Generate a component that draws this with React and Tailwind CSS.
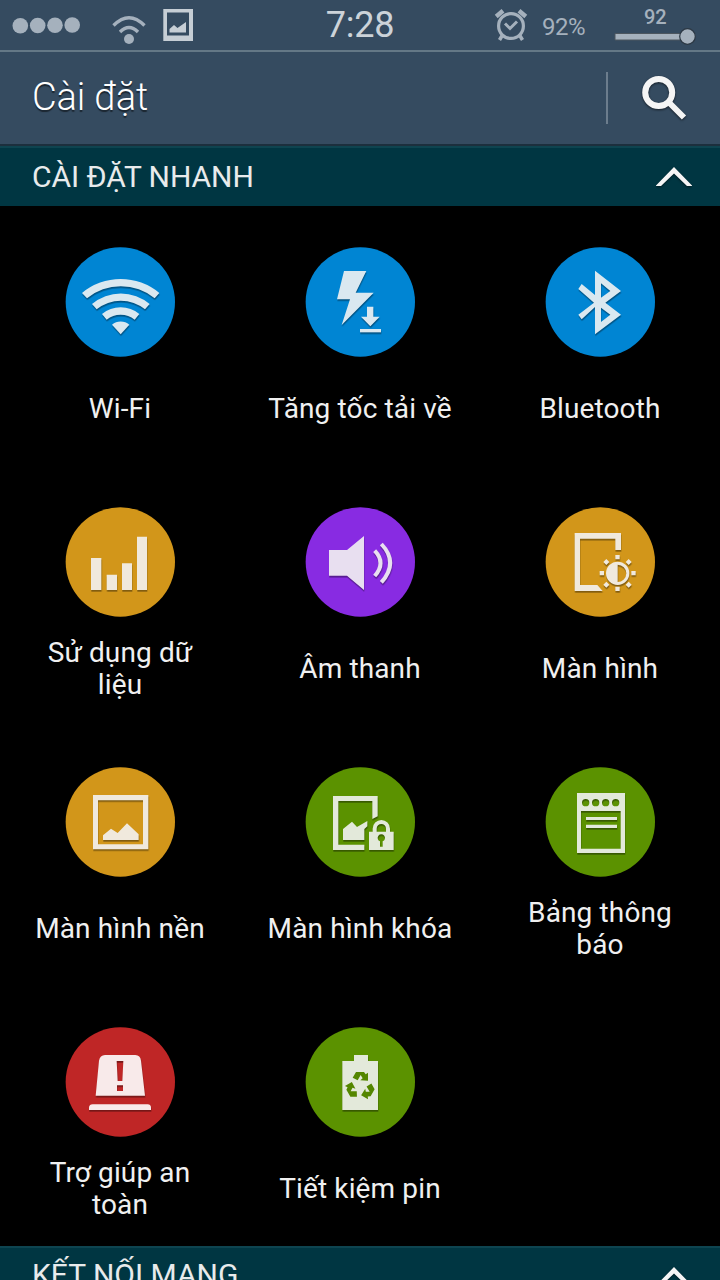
import React from "react";

function WifiGlyph() {
  return (
    <>
      <path d="M96 174A181 181 0 0 1 328 174L314 190A160 160 0 0 0 111 190Z" />
      <path d="M126 207A134 134 0 0 1 299 207L285 223A115 115 0 0 0 140 223Z" />
      <path d="M156 237A88 88 0 0 1 268 237L254 254A68 68 0 0 0 170 254Z" />
      <path d="M186 269A40 40 0 0 1 238 269L212 298Z" />
    </>
  );
}

function BoostGlyph() {
  return (
    <>
      <path d="M252 108H319L287 173H341L245 270L270 193H231Z" />
      <path d="M321 215H340V245H359L331 274L303 245H321Z" />
      <path d="M300 282H363V292H300Z" />
    </>
  );
}

function BluetoothGlyph() {
  return (
    <path
      fillRule="evenodd"
      d="M195 107L273 168L226 203L273 239L195 298V216L155 253L145 239L192 203L145 162L155 147L195 180ZM213 145V188L241 168ZM213 218V261L241 239Z"
    />
  );
}

function DataGlyph() {
  return <path d="M153 189H184V285H153ZM200 239H231V285H200ZM246 205H276V285H246ZM291 125H321V285H291Z" />;
}

function SoundGlyph() {
  return (
    <>
      <path d="M117 165H171L222 123V285L171 242H117Z" />
      <path d="M254 167Q289 204 254 243M274 147Q327 203 274 262" fill="none" stroke="currentColor" strokeWidth="12" />
    </>
  );
}

function DisplayGlyph() {
  return (
    <>
      <path d="M854 114H993V165H976V131H870V270H922L938 288H854Z" />
      <path fillRule="evenodd" d="M948 235a35 35 0 1 0 70 0a35 35 0 1 0 -70 0ZM983 209V261A26 26 0 0 0 983 209Z" />
      <path d="M976 180h13v13h-13ZM976 275h13v13h-13ZM929 228h13v13h-13ZM1024 228h13v13h-13Z" />
      <path d="M949 192l9 9l-9 9l-9 -9ZM1016 192l9 9l-9 9l-9 -9ZM949 260l9 9l-9 9l-9 -9ZM1016 260l9 9l-9 9l-9 -9Z" />
    </>
  );
}

function WallpaperGlyph() {
  return (
    <>
      <path fillRule="evenodd" d="M189 120H355V283H189ZM204 136V268H339V136Z" />
      <path d="M219 255V241L243 221L263 234L291 205L326 238V255Z" />
    </>
  );
}

function LockGlyph() {
  return (
    <>
      <path d="M219 123H353V184L337 192V138H235V269H313V285H219Z" />
      <path d="M249 255V222L276 200L291 216L322 198V214L313 222V255Z" />
      <path d="M344 234V221A20 20 0 0 1 384 221V234" fill="none" stroke="currentColor" strokeWidth="12" />
      <path fillRule="evenodd" d="M327 230H401V285H327ZM360 259V275H368V259A11 11 0 1 0 360 259Z" />
    </>
  );
}

function PanelGlyph() {
  return (
    <>
      <path
        fillRule="evenodd"
        d="M171 114H315V294H171ZM183 168V281H302V168ZM186 143a11 11 0 1 0 22 0a11 11 0 1 0 -22 0ZM216 143a11 11 0 1 0 22 0a11 11 0 1 0 -22 0ZM246 143a11 11 0 1 0 22 0a11 11 0 1 0 -22 0ZM276 143a11 11 0 1 0 22 0a11 11 0 1 0 -22 0Z"
      />
      <path d="M198 186H291V195H198ZM198 209H291V219H198Z" />
    </>
  );
}

function SafetyGlyph() {
  return (
    <>
      <path
        fillRule="evenodd"
        d="M195 120H286Q301 121 303 137L315 242H167L177 137Q180 121 195 120ZM230 138L233 198H247L250 138ZM231 211V228H249V211Z"
      />
      <path d="M147 285V277Q148 268 158 268H323Q332 268 333 277V285Z" />
    </>
  );
}

// one recycle arrow, repeated three times around the centre
const RECYCLE_ARROW = "M938 188L948 171H972L977 178L984 173V197L961 196L968 190L962 180L953 196Z";

function BatteryGlyph() {
  return (
    <>
      <path d="M907 138H942V120H984V138H1014V285H907Z" />
      <g fill="#548600">
        <path d={RECYCLE_ARROW} />
        <path d={RECYCLE_ARROW} transform="rotate(120 961 213)" />
        <path d={RECYCLE_ARROW} transform="rotate(240 961 213)" />
      </g>
    </>
  );
}

const BLUE = "text-[#0085d3]";
const ORANGE = "text-[#d2961a]";
const GREEN = "text-[#5b9200]";

const quickSettings = [
  { label: "Wi-Fi", Glyph: WifiGlyph, disc: BLUE, ink: "text-[#dae8f0]", x: 45 },
  { label: "Tăng tốc tải về", Glyph: BoostGlyph, disc: BLUE, ink: "text-[#dae8f0]", x: 135 },
  { label: "Bluetooth", Glyph: BluetoothGlyph, disc: BLUE, ink: "text-[#dae8f0]", x: 45 },
  { label: "Sử dụng dữ liệu", Glyph: DataGlyph, disc: ORANGE, ink: "text-[#f0e9dd]", x: 75 },
  { label: "Âm thanh", Glyph: SoundGlyph, disc: "text-[#882be2]", ink: "text-[#e8dff0]", x: 45 },
  { label: "Màn hình", Glyph: DisplayGlyph, disc: ORANGE, ink: "text-[#f0e9dd]", x: 765 },
  { label: "Màn hình nền", Glyph: WallpaperGlyph, disc: ORANGE, ink: "text-[#f0e9dd]", x: 105 },
  { label: "Màn hình khóa", Glyph: LockGlyph, disc: GREEN, ink: "text-[#e3e9da]", x: 135 },
  { label: "Bảng thông báo", Glyph: PanelGlyph, disc: GREEN, ink: "text-[#e3e9da]", x: 75 },
  { label: "Trợ giúp an toàn", Glyph: SafetyGlyph, disc: "text-[#bf2626]", ink: "text-[#f8eaea]", x: 75 },
  { label: "Tiết kiệm pin", Glyph: BatteryGlyph, disc: GREEN, ink: "text-[#e3e9da]", x: 795 },
];

function SettingTile({ label, Glyph, disc, ink, x }) {
  return (
    <div className="flex h-[260px] flex-col items-center pt-[41px]">
      <svg className={`h-[110px] w-[110px] shrink-0 ${disc}`} viewBox={`${x} 36 330 330`}>
        <circle cx={x + 166} cy="201" r="164" fill="currentColor" />
        <g className={`[filter:drop-shadow(1px_5px_1px_rgba(0,0,0,0.38))] ${ink}`} fill="currentColor">
          <Glyph />
        </g>
      </svg>
      <div className="mt-5 flex h-16 w-[190px] items-center justify-center text-center text-[28px] leading-8 tracking-[0.13px] text-[#f0f0f0]">
        <span>{label}</span>
      </div>
    </div>
  );
}

function SectionHeader({ title, titleClass = "" }) {
  return (
    <div className="flex h-[60px] shrink-0 items-center justify-between border-t-2 border-[#0e4450] bg-[#003642] pl-8 pr-7">
      <h2 className={`text-[30px] leading-none text-[#e8ebec] ${titleClass}`}>{title}</h2>
      <svg className="h-6 w-9" viewBox="0 0 36 24" fill="#f5f5f5">
        <path d="M18 2L36.5 21H31L18 8.5L5 21H-0.5Z" className="[filter:drop-shadow(0_1px_1px_rgba(0,0,0,0.5))]" />
      </svg>
    </div>
  );
}

function StatusBar() {
  return (
    <div className="flex h-[50px] items-center text-[#a5b1bd]">
      <svg className="h-[50px] w-[200px]" viewBox="0 0 200 50" fill="currentColor">
        <circle cx="20.3" cy="25.7" r="7.8" />
        <circle cx="37.7" cy="25.5" r="7.8" />
        <circle cx="55" cy="25.3" r="7.8" />
        <circle cx="72.2" cy="25" r="7.8" />
        <path d="M113.500 25.500Q129 10 144.500 25.500M120 32Q129 23 138 32" fill="none" stroke="currentColor" strokeWidth="3.400" />
        <circle cx="129" cy="39" r="5" />
        <path fill="#c6ced5" fillRule="evenodd" d="M163.300 9H193V41H163.300ZM167 12.500V35.500H189V12.500Z" />
        <path fill="#c6ced5" d="M169.500 32.500V29L174 25L177.500 28L186 22V32.500Z" />
      </svg>
      <span className="ml-[125px] w-[70px] whitespace-nowrap text-center text-[36px] leading-none tracking-[-0.2px] text-[#ccd3d9]">7:28</span>
      <svg className="ml-[99px] h-[34px] w-[34px]" viewBox="0 0 34 34" fill="none" stroke="currentColor">
        <circle cx="17" cy="18" r="12.400" strokeWidth="3.200" />
        <path d="M11 15.500L16 20.500L23 13.500" strokeWidth="3" />
        <path d="M2.200 8.500L9 2.800M31.800 8.500L25 2.800" strokeWidth="4.400" />
        <path d="M8.500 27L5.500 32M25.500 27L28.500 32" strokeWidth="3.500" />
      </svg>
      <span className="ml-[14px] w-[45px] whitespace-nowrap pt-[3px] text-[24px] leading-none tracking-[-0.5px]">92%</span>
      <div className="ml-[27px] flex flex-col pt-[3px]">
        <span className="pl-[30px] text-[20px] font-medium leading-5">92</span>
        <svg className="h-5 w-[84px]" viewBox="0 0 84 20">
          <path d="M1 6.500H68V13H1Z" fill="currentColor" stroke="#4c565f" />
          <circle cx="73.500" cy="9.500" r="7.800" fill="currentColor" stroke="#2c3844" strokeWidth="1.200" />
        </svg>
      </div>
    </div>
  );
}

export default function App() {
  return (
    <div className="flex h-[1280px] w-[720px] flex-col overflow-hidden bg-black font-[Roboto,sans-serif]">
      <header className="h-[146px] shrink-0 border-b-2 border-[#1c2f3d] bg-[#354b60]">
        <StatusBar />
        <div className="flex h-[94px] items-center border-t-2 border-[#647886] pl-8">
          <h1 className="pb-0.5 text-[38px] font-light leading-none tracking-[-0.15px] text-white [text-shadow:0_2px_1px_rgba(0,0,0,0.5)]">Cài đặt</h1>
          <div className="ml-auto h-[52px] w-0.5 bg-[#6c7d8d]" />
          <svg className="ml-[32px] mr-[30px] h-[50px] w-[50px]" viewBox="0 0 50 50" fill="none" stroke="#f5f5f5">
            <g className="[filter:drop-shadow(0_1px_1px_rgba(0,0,0,0.6))]">
              <circle cx="18.700" cy="19.500" r="13.500" strokeWidth="6" />
              <path d="M28.500 29L44 44.500" strokeWidth="6" />
            </g>
          </svg>
        </div>
      </header>

      <SectionHeader title="CÀI ĐẶT NHANH" titleClass="tracking-[-0.05px]" />
      <main className="grid shrink-0 grid-cols-3">
        {quickSettings.map((item) => (
          <SettingTile key={item.label} {...item} />
        ))}
      </main>
      <SectionHeader title="KẾT NỐI MẠNG" titleClass="pb-1" />
    </div>
  );
}
